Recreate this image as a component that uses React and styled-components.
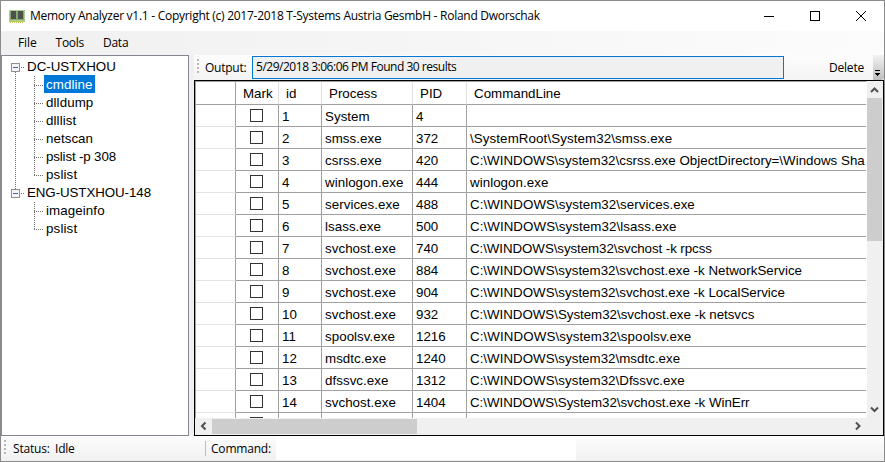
import React from 'react';
import styled, { createGlobalStyle } from 'styled-components';

const Global = createGlobalStyle`
  * { box-sizing: border-box; }
  body { margin: 0; background: #fff; color: #000; overflow: hidden; }
`;

const Window = styled.div`
  width: 885px;
  height: 462px;
  display: flex;
  flex-direction: column;
  border: 1px solid #8b8b8b;
  background: #f0f0f0;
  font: 12px/16px "Open Sans", "Noto Sans", sans-serif;
  white-space: pre;
`;

const Label = styled.span`
  letter-spacing: ${(p) => p.$spacing ?? -0.2}px;
`;

const TitleBar = styled.header`
  height: 30px;
  flex: none;
  display: flex;
  align-items: center;
  padding-left: 8px;
  background: #fff;
`;

const Title = styled.h1`
  margin: 0 auto 0 5px;
  font-size: 12px;
  font-weight: 400;
  letter-spacing: -0.27px;
`;

const Caption = styled.button`
  width: 46px;
  height: 30px;
  padding: 0;
  border: 0;
  background: none;
  display: flex;
  align-items: center;
  justify-content: center;
`;

const MenuBar = styled.nav`
  height: 24px;
  flex: none;
  display: flex;
  align-items: center;
  padding-left: 17px;
  gap: 19px;
  background: linear-gradient(90deg, #f0f0f0, #fcfcfc);
`;

const Body = styled.main`
  height: 381px;
  flex: none;
  display: flex;
  gap: 5px;
`;

const Tree = styled.ul`
  width: 188px;
  height: 381px;
  margin: 0;
  padding: 1px 0 0 9px;
  list-style: none;
  border: 1px solid #828790;
  background: #fff;
  font: 13.33px/18px "Liberation Sans", Arial, sans-serif;
`;

const TreeRow = styled.li`
  height: 18px;
  display: flex;
  align-items: center;
`;

const TreeLines = styled.svg`
  flex: none;
  overflow: visible;
  shape-rendering: crispEdges;
`;

const TreeText = styled.span`
  height: 18px;
  padding: 0 2px;
  line-height: 19px;
  letter-spacing: ${(p) => p.$spacing ?? 0}px;
  color: ${(p) => (p.$selected ? '#fff' : '#000')};
  background: ${(p) => (p.$selected ? '#0078d7' : 'transparent')};
`;

const Pane = styled.section`
  width: 690px;
  display: flex;
  flex-direction: column;
`;

const ToolBar = styled.div`
  height: 25px;
  flex: none;
  display: flex;
  align-items: center;
  background: linear-gradient(#fdfdfd, #f3f3f3);
`;

const Grip = styled.i`
  width: 2px;
  height: 14px;
  margin: 0 0 3px 3px;
  background: repeating-linear-gradient(#b8b8b8 0 2px, transparent 2px 4px);
`;

const Output = styled.div`
  width: 532px;
  height: 23px;
  margin-left: 5px;
  padding: 2px 3px;
  border: 1px solid #0078d7;
  background: #f0f0f0;
`;

const Overflow = styled.div`
  width: 11px;
  height: 25px;
  margin-left: auto;
  background: linear-gradient(#f2f2f2, #bdbdbd);
  border-radius: 0 0 3px 0;
`;

const GridFrame = styled.div`
  width: 690px;
  height: 356px;
  display: grid;
  grid-template: 337px 17px / 672px 16px;
  border: 1px solid #000;
  background: #f0f0f0;
`;

const GridView = styled.div`
  overflow: hidden;
  border-top: 1px solid #a0a0a0;
  border-left: 1px solid #a0a0a0;
  border-right: 1px solid #fff;
  background: #fff;
  font: 13.33px/21px "Liberation Sans", Arial, sans-serif;
`;

const GridRow = styled.div`
  height: ${(p) => (p.$head ? 23 : 22)}px;
  display: grid;
  grid-template-columns: 40px 43px 43px 91px 54px 399px;
`;

const Cell = styled.div`
  overflow: hidden;
  padding: 1px 0 0 ${(p) => (p.$head ? 7 : 3)}px;
  letter-spacing: ${(p) => p.$spacing ?? 0}px;
  border-right: 1px solid ${(p) => (p.$head ? '#e0e0e0' : '#a0a0a0')};
  border-bottom: 1px solid #a0a0a0;
  &:first-child {
    border-right-color: #a0a0a0;
    border-bottom-color: ${(p) => (p.$head ? '#a0a0a0' : '#e3e3e3')};
  }
  &:last-child { border-right: 0; }
`;

const CheckBox = styled.span`
  display: block;
  width: 13px;
  height: 13px;
  margin: 3px 0 0 11px;
  border: 1px solid #333;
  background: #fff;
`;

const VScroll = styled.div`
  display: flex;
  flex-direction: column;
  justify-content: space-between;
  padding-right: 1px;
`;

const HScroll = styled.div`
  display: flex;
  height: 16px;
`;

const Thumb = styled.div`
  background: #cdcdcd;
  width: ${(p) => p.$w}px;
  height: ${(p) => p.$h}px;
  margin: ${(p) => p.$m};
`;

const Arrow = styled.svg`
  display: block;
  flex: none;
  fill: none;
  stroke: #505050;
  stroke-width: 2;
`;

const StatusBar = styled.footer`
  height: 25px;
  flex: none;
  display: flex;
  align-items: center;
  background: linear-gradient(#fdfdfd, #f0f0f0);
`;

const Separator = styled.i`
  width: 1px;
  height: 15px;
  background: #bdbdbd;
`;

const CommandInput = styled.div`
  width: 300px;
  height: 23px;
  background: #fff;
`;

const DeleteLabel = styled(Label)`
  margin-left: 45px;
`;

const OutputLabel = styled(Label)`
  width: 42px;
  margin-left: 6px;
`;

const StatusText = styled(Label)`
  width: 42px;
  margin-left: 7px;
`;

const IdleText = styled(Label)`
  width: 150px;
`;

const CommandText = styled(Label)`
  width: 65px;
  margin-left: 5px;
`;

const nodes = [
  { text: 'DC-USTXHOU', kind: 'firstRoot' },
  { text: 'cmdline', kind: 'child', selected: true, spacing: 0.1 },
  { text: 'dlldump', kind: 'child', spacing: 0.1 },
  { text: 'dlllist', kind: 'child', spacing: 0.1 },
  { text: 'netscan', kind: 'child', spacing: 0.05 },
  { text: 'pslist -p 308', kind: 'child', spacing: -0.15 },
  { text: 'pslist', kind: 'last', spacing: 0.15 },
  { text: 'ENG-USTXHOU-148', kind: 'root', spacing: -0.08 },
  { text: 'imageinfo', kind: 'orphan', spacing: 0.1 },
  { text: 'pslist', kind: 'orphanLast', spacing: 0.15 },
];

const rows = [
  ['1', 'System', '4', ''],
  ['2', 'smss.exe', '372', '\\SystemRoot\\System32\\smss.exe', 0.1],
  ['3', 'csrss.exe', '420', 'C:\\WINDOWS\\system32\\csrss.exe ObjectDirectory=\\Windows Sha', 0.02],
  ['4', 'winlogon.exe', '444', 'winlogon.exe', 0.05],
  ['5', 'services.exe', '488', 'C:\\WINDOWS\\system32\\services.exe', 0.06],
  ['6', 'lsass.exe', '500', 'C:\\WINDOWS\\system32\\lsass.exe', 0.07],
  ['7', 'svchost.exe', '740', 'C:\\WINDOWS\\system32\\svchost -k rpcss', -0.07],
  ['8', 'svchost.exe', '884', 'C:\\WINDOWS\\system32\\svchost.exe -k NetworkService', 0.02],
  ['9', 'svchost.exe', '904', 'C:\\WINDOWS\\system32\\svchost.exe -k LocalService', 0.02],
  ['10', 'svchost.exe', '932', 'C:\\WINDOWS\\System32\\svchost.exe -k netsvcs', -0.02],
  ['11', 'spoolsv.exe', '1216', 'C:\\WINDOWS\\system32\\spoolsv.exe', 0.1],
  ['12', 'msdtc.exe', '1240', 'C:\\WINDOWS\\system32\\msdtc.exe', 0.02],
  ['13', 'dfssvc.exe', '1312', 'C:\\WINDOWS\\system32\\Dfssvc.exe', 0.02],
  ['14', 'svchost.exe', '1404', 'C:\\WINDOWS\\System32\\svchost.exe -k WinErr', -0.03],
  ['', '', '', ''],
];

function Branch({ kind }) {
  const dots = { stroke: '#707070', strokeDasharray: '1 1', fill: 'none' };
  if (kind === 'firstRoot' || kind === 'root') {
    return (
      <TreeLines width="14" height="18" viewBox="0 -1 14 18">
        {kind === 'root' ? <path d="M4.5 0V6" {...dots} /> : <path d="M4.5 14V18" {...dots} />}
        <path d="M10 9.5H13" {...dots} />
        <rect x="0.5" y="5.5" width="8" height="8" rx="1" fill="#f4f4f4" stroke="#919191" />
        <path d="M2 9.5H7" stroke="#4b63a7" />
      </TreeLines>
    );
  }
  const last = kind === 'last' || kind === 'orphanLast';
  return (
    <TreeLines width="33" height="18" viewBox="0 -1 33 18">
      {(kind === 'child' || kind === 'last') && <path d="M4.5 0V18" {...dots} />}
      <path d={last ? 'M23.5 0V9' : 'M23.5 0V18'} {...dots} />
      <path d="M23 9.5H32" {...dots} />
    </TreeLines>
  );
}

function Chip() {
  return (
    <svg width="16" height="13" shapeRendering="crispEdges">
      <rect width="16" height="12" fill="#a9cf8f" />
      <rect y="1" x="1" width="14" height="9" fill="#84a873" />
      <rect x="2" y="1" width="5" height="8" fill="#4d504d" />
      <rect x="9" y="1" width="5" height="8" fill="#4d504d" />
      <path d="M1 11.5H15" stroke="#c7c65b" strokeWidth="2" strokeDasharray="1 1" />
    </svg>
  );
}

export default function App() {
  return (
    <>
      <Global />
      <Window>
        <TitleBar>
          <Chip />
          <Title>Memory Analyzer v1.1 - Copyright (c) 2017-2018 T-Systems Austria GesmbH - Roland Dworschak</Title>
          <Caption aria-label="Minimize">
            <svg width="10" height="10"><path d="M0 5.5H10" stroke="#000" /></svg>
          </Caption>
          <Caption aria-label="Maximize">
            <svg width="10" height="10"><rect x=".5" y=".5" width="9" height="9" fill="none" stroke="#000" /></svg>
          </Caption>
          <Caption aria-label="Close">
            <svg width="10" height="10"><path d="M0 0L10 10M10 0L0 10" stroke="#000" /></svg>
          </Caption>
        </TitleBar>
        <MenuBar>
          <Label $spacing={-0.1}>File</Label>
          <Label $spacing={-0.3}>Tools</Label>
          <Label>Data</Label>
        </MenuBar>
        <Body>
          <Tree>
            {nodes.map((node, i) => (
              <TreeRow key={i}>
                <Branch kind={node.kind} />
                <TreeText $selected={node.selected} $spacing={node.spacing}>{node.text}</TreeText>
              </TreeRow>
            ))}
          </Tree>
          <Pane>
            <ToolBar>
              <Grip />
              <OutputLabel $spacing={-0.25}>Output:</OutputLabel>
              <Output><Label $spacing={-0.48}>5/29/2018 3:06:06 PM Found 30 results</Label></Output>
              <DeleteLabel>Delete</DeleteLabel>
              <Overflow>
                <svg width="11" height="25" shapeRendering="crispEdges">
                  <path d="M2 15.5H7" stroke="#000" />
                  <path d="M2 18H7L4.5 21Z" />
                </svg>
              </Overflow>
            </ToolBar>
            <GridFrame>
              <GridView>
                <GridRow $head>
                  {['', 'Mark', 'id', 'Process', 'PID', 'CommandLine'].map((t, i) => (
                    <Cell key={i} $head>{t}</Cell>
                  ))}
                </GridRow>
                {rows.map(([id, process, pid, command, spacing], i) => (
                  <GridRow key={i}>
                    <Cell />
                    <Cell><CheckBox /></Cell>
                    <Cell>{id}</Cell>
                    <Cell $spacing={0.05}>{process}</Cell>
                    <Cell>{pid}</Cell>
                    <Cell $spacing={spacing}>{command}</Cell>
                  </GridRow>
                ))}
              </GridView>
              <VScroll>
                <Arrow width="15" height="17"><path d="M4 11L7.5 7.5L11 11" /></Arrow>
                <Thumb $w={15} $h={143} $m="0 0 auto" />
                <Arrow width="15" height="17"><path d="M4 6.5L7.5 10L11 6.5" /></Arrow>
              </VScroll>
              <HScroll>
                <Arrow width="17" height="16"><path d="M10.5 4.5L7 8L10.5 11.5" /></Arrow>
                <Thumb $w={205} $h={15} $m="1px auto 0 0" />
                <Arrow width="17" height="16"><path d="M6 4.5L9.5 8L6 11.5" /></Arrow>
              </HScroll>
            </GridFrame>
          </Pane>
        </Body>
        <StatusBar>
          <Grip />
          <StatusText>Status:</StatusText>
          <IdleText>Idle</IdleText>
          <Separator />
          <CommandText>Command:</CommandText>
          <CommandInput />
        </StatusBar>
      </Window>
    </>
  );
}
